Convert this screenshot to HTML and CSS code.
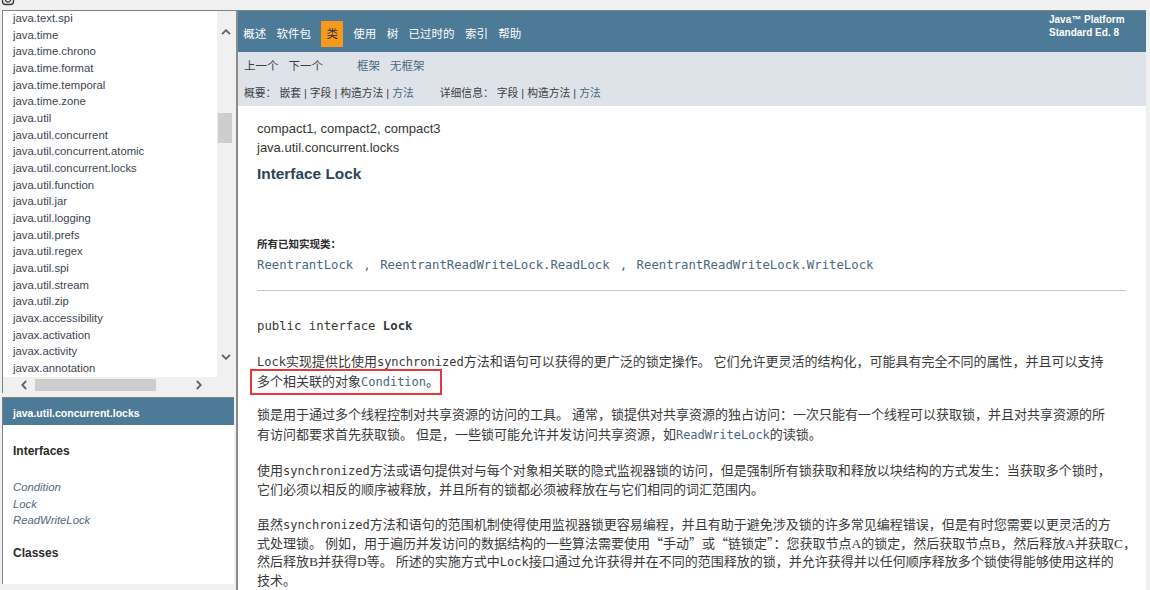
FILE: index.html
```html
<!DOCTYPE html>
<html lang="zh">
<head>
<meta charset="utf-8">
<title>Lock (Java Platform SE 8)</title>
<link rel="stylesheet" href="styles.css">
</head>
<body>
<div class="titlebar">
  <svg class="app-icon" width="14" height="6" viewBox="0 0 14 6"><rect x="1.5" y="-6" width="11" height="10.5" rx="3" fill="none" stroke="#3a3a3a" stroke-width="1.4"/><circle cx="7" cy="-0.5" r="2.6" fill="none" stroke="#3a3a3a" stroke-width="1.3"/></svg>
</div>
<div class="frames">
  <div class="left-col">
    <div class="pkg-frame">
      <ul class="pkg-list">
        <li>java.text.spi</li>
        <li>java.time</li>
        <li>java.time.chrono</li>
        <li>java.time.format</li>
        <li>java.time.temporal</li>
        <li>java.time.zone</li>
        <li>java.util</li>
        <li>java.util.concurrent</li>
        <li>java.util.concurrent.atomic</li>
        <li>java.util.concurrent.locks</li>
        <li>java.util.function</li>
        <li>java.util.jar</li>
        <li>java.util.logging</li>
        <li>java.util.prefs</li>
        <li>java.util.regex</li>
        <li>java.util.spi</li>
        <li>java.util.stream</li>
        <li>java.util.zip</li>
        <li>javax.accessibility</li>
        <li>javax.activation</li>
        <li>javax.activity</li>
        <li>javax.annotation</li>
      </ul>
      <div class="vscroll">
        <span class="arrow"><svg width="10" height="6" viewBox="0 0 10 6"><path d="M1 5.2 L5 1.2 L9 5.2" fill="none" stroke="#606060" stroke-width="1.8"/></svg></span>
        <span class="vthumb"></span>
        <span class="arrow arrow-down"><svg width="10" height="6" viewBox="0 0 10 6"><path d="M1 0.8 L5 4.8 L9 0.8" fill="none" stroke="#606060" stroke-width="1.8"/></svg></span>
      </div>
      <div class="hscroll">
        <span class="arrow"><svg width="6" height="10" viewBox="0 0 6 10"><path d="M5.2 1 L1.2 5 L5.2 9" fill="none" stroke="#606060" stroke-width="1.8"/></svg></span>
        <span class="hthumb"></span>
        <span class="arrow arrow-right"><svg width="6" height="10" viewBox="0 0 6 10"><path d="M0.8 1 L4.8 5 L0.8 9" fill="none" stroke="#606060" stroke-width="1.8"/></svg></span>
      </div>
      <div class="corner"></div>
    </div>
    <div class="cls-frame">
      <div class="cls-header">java.util.concurrent.locks</div>
      <h2 class="cls-title">Interfaces</h2>
      <ul class="cls-list">
        <li>Condition</li>
        <li>Lock</li>
        <li>ReadWriteLock</li>
      </ul>
      <h2 class="cls-title cls-classes">Classes</h2>
    </div>
  </div>

  <div class="main-frame">
    <div class="topnav">
      <ul class="navlist">
        <li>概述</li>
        <li>软件包</li>
        <li class="current">类</li>
        <li>使用</li>
        <li>树</li>
        <li>已过时的</li>
        <li>索引</li>
        <li>帮助</li>
      </ul>
      <div class="about">Java™ Platform<br>Standard Ed. 8</div>
    </div>
    <div class="subnav">
      <div class="subrow">
        <span>上一个</span>
        <span>下一个</span>
        <a class="frames-link">框架</a>
        <a>无框架</a>
      </div>
      <div class="subrow subrow-small">
        <span>概要：&nbsp;嵌套 | 字段 | 构造方法 | <a>方法</a></span>
        <span class="detail">详细信息：&nbsp;字段 | 构造方法 | <a>方法</a></span>
      </div>
    </div>
    <div class="content">
      <div class="profiles">compact1, compact2, compact3</div>
      <div class="pkg-name">java.util.concurrent.locks</div>
      <h2 class="title">Interface Lock</h2>
      <div class="impl-label">所有已知实现类：</div>
      <div class="impl-list"><a>ReentrantLock</a><span class="sep">,</span><a>ReentrantReadWriteLock.ReadLock</a><span class="sep">,</span><a>ReentrantReadWriteLock.WriteLock</a></div>
      <hr class="rule">
      <div class="signature">public interface <b>Lock</b></div>
      <p class="para first"><code>Lock</code>实现提供比使用<code>synchronized</code>方法和语句可以获得的更广泛的锁定操作。 它们允许更灵活的结构化，可能具有完全不同的属性，并且可以支持<br><span class="mark">多个相关联的对象<a><code>Condition</code></a>。</span></p>
      <p class="para">锁是用于通过多个线程控制对共享资源的访问的工具。 通常，锁提供对共享资源的独占访问：一次只能有一个线程可以获取锁，并且对共享资源的所<br>有访问都要求首先获取锁。 但是，一些锁可能允许并发访问共享资源，如<a><code>ReadWriteLock</code></a>的读锁。</p>
      <p class="para">使用<code>synchronized</code>方法或语句提供对与每个对象相关联的隐式监视器锁的访问，但是强制所有锁获取和释放以块结构的方式发生：当获取多个锁时，<br>它们必须以相反的顺序被释放，并且所有的锁都必须被释放在与它们相同的词汇范围内。</p>
      <p class="para last">虽然<code>synchronized</code>方法和语句的范围机制使得使用监视器锁更容易编程，并且有助于避免涉及锁的许多常见编程错误，但是有时您需要以更灵活的方<br>式处理锁。 例如，用于遍历并发访问的数据结构的一些算法需要使用“手动”或“链锁定”：您获取节点<span class="ser">A</span>的锁定，然后获取节点<span class="ser">B</span>，然后释放<span class="ser">A</span>并获取<span class="ser">C</span>，<br>然后释放<span class="ser">B</span>并获得<span class="ser">D</span>等。 所述的实施方式中<code>Lock</code>接口通过允许获得并在不同的范围释放的锁，并允许获得并以任何顺序释放多个锁使得能够使用这样的<br>技术。</p>
    </div>
  </div>
  <div class="edge"></div>
</div>
</body>
</html>
```

FILE: styles.css
```css
html, body {
  margin: 0;
  padding: 0;
}

body {
  width: 1150px;
  height: 590px;
  overflow: hidden;
  background: #f0f0f0;
  font-family: "Liberation Sans", Arial, "Noto Sans CJK SC", sans-serif;
  color: #353833;
}

ul {
  list-style: none;
  margin: 0;
  padding: 0;
}

a {
  color: #4a6782;
  text-decoration: none;
}

/* ---------- window strip ---------- */
.titlebar {
  height: 10px;
  overflow: hidden;
}

.app-icon {
  display: block;
  margin-left: 1px;
}

.frames {
  display: flex;
  height: 580px;
}

/* ---------- left column ---------- */
.left-col {
  width: 234px;
  padding-left: 2px;
  display: flex;
  flex-direction: column;
}

.pkg-frame {
  height: 383px;
  box-sizing: border-box;
  border-top: 1px solid #828282;
  border-left: 1px solid #828282;
  display: grid;
  grid-template-columns: 214px 19px;
  grid-template-rows: 366px 16px;
  background: #fff;
}

.pkg-list {
  overflow: hidden;
  padding: 0 0 0 10px;
  margin-top: -1px;
  font-size: 11.3px;
  line-height: 16.67px;
  color: #3d4650;
  white-space: nowrap;
}

.vscroll {
  background: #f0f0f0;
  display: flex;
  flex-direction: column;
  padding: 12px 2px 12px 0;
}

.vscroll .arrow {
  height: 17px;
  display: flex;
  align-items: center;
  justify-content: center;
}

.vthumb {
  margin-top: 73px;
  margin-left: 1px;
  width: 14px;
  height: 30px;
  background: #cdcdcd;
}

.vscroll .arrow-down {
  margin-top: auto;
}

.hscroll {
  background: #f0f0f0;
  display: flex;
  align-items: center;
  padding: 0 10px 0 12px;
}

.hscroll .arrow {
  width: 17px;
  height: 16px;
  display: flex;
  align-items: center;
  justify-content: center;
}

.hthumb {
  margin-left: 3px;
  width: 121px;
  height: 12px;
  background: #cdcdcd;
}

.hscroll .arrow-right {
  margin-left: auto;
}

.corner {
  background: #f0f0f0;
}

.cls-frame {
  margin-top: 4px;
  width: 232px;
  height: 187px;
  box-sizing: border-box;
  border-top: 1px solid #828282;
  border-left: 1px solid #828282;
  background: #fff;
}

.cls-header {
  height: 27px;
  box-sizing: border-box;
  padding: 3px 0 0 10px;
  line-height: 24px;
  background: #4d7a97;
  color: #fff;
  font-weight: bold;
  font-size: 10.5px;
}

.cls-title {
  margin: 18px 0 0 10px;
  font-size: 12px;
  line-height: 16px;
  font-weight: bold;
  color: #2c2c2c;
}

.cls-list {
  margin-top: 20px;
  padding-left: 10px;
  font-style: italic;
  font-size: 11.3px;
  line-height: 16.7px;
  color: #56687a;
}

.cls-classes {
  margin-top: 16px;
}

/* ---------- main frame ---------- */
.main-frame {
  width: 910px;
  box-sizing: border-box;
  border-top: 1px solid #828282;
  border-left: 2px solid #8a8a8a;
  background: #fff;
  overflow: hidden;
}

.topnav {
  height: 41px;
  background: #4d7a97;
  display: flex;
  align-items: flex-start;
  color: #fff;
}

.navlist {
  display: flex;
  margin-top: 10px;
  padding-left: 0;
  font-size: 11.5px;
}

.navlist li {
  line-height: 26px;
  padding: 0 5.2px;
}

.navlist li.current {
  margin: 0 5px;
  background: #f8981d;
  color: #253441;
}

.about {
  margin-left: auto;
  margin-top: 1.5px;
  width: 78px;
  padding-right: 19px;
  font-size: 10px;
  line-height: 13px;
  font-weight: bold;
  white-space: nowrap;
}

.subnav {
  height: 54px;
  background: #dee3e9;
  color: #3e4144;
}

.subrow {
  height: 27px;
  display: flex;
  align-items: center;
  padding: 0 0 0 6px;
  gap: 10px;
  font-size: 11.5px;
  line-height: 14px;
}

.subrow .frames-link {
  margin-left: 24px;
}

.subrow-small {
  font-size: 10.8px;
  gap: 26px;
  white-space: nowrap;
}

.content {
  padding: 12.5px 20px 0 19px;
}

.profiles,
.pkg-name {
  font-size: 13px;
  line-height: 19px;
}

.title {
  margin: 7.5px 0 0;
  font-size: 15.4px;
  line-height: 20px;
  font-weight: bold;
  color: #2c4557;
}

.impl-label {
  margin-top: 51.5px;
  font-size: 10.5px;
  line-height: 16px;
  font-weight: bold;
  color: #2c2c2c;
}

.impl-list {
  margin-top: 4px;
  font-family: "DejaVu Sans Mono", monospace;
  font-size: 12.3px;
  line-height: 18px;
  color: #4a6782;
  white-space: pre;
}

.impl-list .sep {
  padding: 0 9.5px 0 10px;
}

.rule {
  margin: 16.5px 0 0;
  border: 0;
  border-top: 1px solid #c6c6c6;
  height: 0;
}

.signature {
  margin-top: 26px;
  font-family: "DejaVu Sans Mono", monospace;
  font-size: 12.3px;
  line-height: 18px;
  color: #353833;
}

.para {
  margin: 16.5px 0 0;
  font-family: "Noto Sans CJK SC", sans-serif;
  font-size: 13px;
  line-height: 19.5px;
  white-space: nowrap;
  color: #3a3a3a;
}

.para.first {
  margin-top: 16.25px;
  margin-bottom: -2.5px;
}

.para.last {
  margin-top: 16px;
  line-height: 18.8px;
}

.para code {
  font-family: "DejaVu Sans Mono", monospace;
  font-size: 12px;
  line-height: 0;
}

.para .ser {
  font-family: "Liberation Serif", serif;
  font-size: 13.5px;
  line-height: 0;
}

.mark {
  border: 2px solid #e8363a;
  padding: 0 1px 3px 5px;
  margin-left: -7px;
}

.edge {
  flex: 1;
}
```
